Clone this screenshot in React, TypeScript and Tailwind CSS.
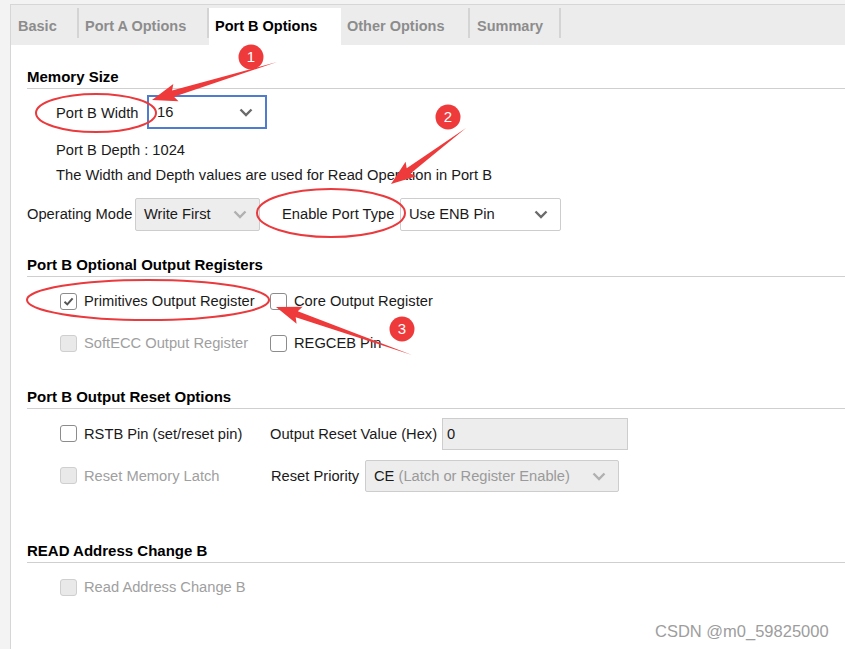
import React from "react";

function Chevron({ light }: { light?: boolean }) {
  return (
    <svg width="14" height="9" viewBox="0 0 14 9" className="shrink-0">
      <path d="M1.5 1.5 L7 7 L12.5 1.5" fill="none" stroke={light ? "#b0b0b0" : "#6b6b6b"} strokeWidth="2.4" />
    </svg>
  );
}

function Check({ checked, disabled }: { checked?: boolean; disabled?: boolean }) {
  return (
    <div
      className={
        "w-[17px] h-[17px] rounded-[3px] border shrink-0 flex items-center justify-center " +
        (disabled ? "bg-[#e9e9e9] border-[#cfcfcf]" : "bg-white border-[#8c8c8c]")
      }
    >
      {checked && (
        <svg width="13" height="13" viewBox="0 0 13 13">
          <path d="M2.5 6.8 L5.3 9.4 L10.6 3.4" fill="none" stroke="#555" strokeWidth="2" />
        </svg>
      )}
    </div>
  );
}

function Header({ title, mt }: { title: string; mt: string }) {
  return (
    <div className={"h-[22px] border-b border-[#cfcfcf] flex items-start " + mt}>
      <span className="font-bold text-[15px] leading-[20px] text-black">{title}</span>
    </div>
  );
}

function arrow(tx: number, ty: number, px: number, py: number) {
  const dx = px - tx, dy = py - ty;
  const L = Math.hypot(dx, dy);
  const ux = dx / L, uy = dy / L;
  const nx = -uy, ny = ux;
  const head = 22, hw = 9, sw = 3.2;
  const bx = px - ux * head, by = py - uy * head;
  const pts = [
    [tx, ty],
    [bx + nx * sw, by + ny * sw],
    [bx + nx * hw - ux * 3, by + ny * hw - uy * 3],
    [px, py],
    [bx - nx * hw - ux * 3, by - ny * hw - uy * 3],
    [bx - nx * sw, by - ny * sw],
  ];
  return pts.map((p) => p[0].toFixed(1) + "," + p[1].toFixed(1)).join(" ");
}

function Badge({ x, y, n }: { x: number; y: number; n: string }) {
  return (
    <g>
      <circle cx={x} cy={y} r="12.5" fill="#ee3a3a" />
      <text x={x} y={y + 5} textAnchor="middle" fill="#fff" fontSize="15" fontFamily="Liberation Sans, Arial, sans-serif">
        {n}
      </text>
    </g>
  );
}

function Sep() {
  return <div className="w-[2px] h-[30px] bg-[#d4d4d4] self-start mt-[3px] shrink-0" />;
}

export default function App() {
  return (
    <div className="relative w-[845px] h-[649px] overflow-hidden bg-[#f3f3f3] pl-[10px] pt-[4px] font-['Liberation_Sans',Arial,sans-serif] text-[14.7px] text-[#1a1a1a]">
      <div className="h-full border-l border-t border-[#d6d6d6] bg-white flex flex-col">
        {/* tab bar */}
        <div className="h-[40px] bg-[#ececec] flex items-end shrink-0">
          <div className="h-[37px] w-[66px] flex items-center pl-[7px]">
            <span className="font-bold text-[14.5px] text-[#8c8c8c]">Basic</span>
          </div>
          <Sep />
          <div className="h-[37px] w-[128px] flex items-center pl-[6px]">
            <span className="font-bold text-[14.5px] text-[#8c8c8c]">Port A Options</span>
          </div>
          <Sep />
          <div className="h-[37px] w-[132px] bg-white flex items-center pl-[6px]">
            <span className="font-bold text-[14.5px] text-black">Port B Options</span>
          </div>
          <div className="h-[37px] w-[127px] flex items-center pl-[6px]">
            <span className="font-bold text-[14.5px] text-[#8c8c8c]">Other Options</span>
          </div>
          <Sep />
          <div className="h-[37px] w-[89px] flex items-center pl-[7px]">
            <span className="font-bold text-[14.5px] text-[#8c8c8c]">Summary</span>
          </div>
          <Sep />
        </div>

        {/* content */}
        <div className="pl-[16px] flex flex-col">
          <Header title="Memory Size" mt="mt-[22px]" />

          <div className="mt-[6px] flex items-center h-[34px] pl-[29px]">
            <span className="w-[91px] pt-[3px]">Port B Width</span>
            <div className="w-[120px] h-[34px] border-2 border-[#4f7ccc] bg-white flex items-center justify-between pl-[8px] pr-[12px]">
              <span>16</span>
              <Chevron />
            </div>
          </div>

          <div className="mt-[11px] pl-[29px] leading-[20px]">Port B Depth : 1024</div>
          <div className="mt-[5px] pl-[29px] leading-[20px]">
            The Width and Depth values are used for Read Operation in Port B
          </div>

          <div className="mt-[13px] flex items-center h-[33px]">
            <span className="w-[108px]">Operating Mode</span>
            <div className="w-[125px] h-[33px] border border-[#cdcdcd] rounded-[2px] bg-[#ededed] flex items-center justify-between pl-[8px] pr-[12px]">
              <span>Write First</span>
              <Chevron light />
            </div>
            <span className="ml-[22px] w-[118px]">Enable Port Type</span>
            <div className="w-[161px] h-[33px] border border-[#cdcdcd] rounded-[2px] bg-white flex items-center justify-between pl-[8px] pr-[12px]">
              <span>Use ENB Pin</span>
              <Chevron />
            </div>
          </div>

          <Header title="Port B Optional Output Registers" mt="mt-[24px]" />

          <div className="mt-[14px] flex items-center h-[20px] pl-[33px]">
            <div className="w-[210px] flex items-center gap-[7px]">
              <Check checked />
              <span>Primitives Output Register</span>
            </div>
            <div className="flex items-center gap-[7px]">
              <Check />
              <span>Core Output Register</span>
            </div>
          </div>
          <div className="mt-[22px] flex items-center h-[20px] pl-[33px]">
            <div className="w-[210px] flex items-center gap-[7px]">
              <Check disabled />
              <span className="text-[#a0a0a0]">SoftECC Output Register</span>
            </div>
            <div className="flex items-center gap-[7px]">
              <Check />
              <span>REGCEB Pin</span>
            </div>
          </div>

          <Header title="Port B Output Reset Options" mt="mt-[34px]" />

          <div className="mt-[9px] flex items-center h-[32px] pl-[33px]">
            <div className="w-[210px] flex items-center gap-[7px]">
              <Check />
              <span>RSTB Pin (set/reset pin)</span>
            </div>
            <span className="w-[172px]">Output Reset Value (Hex)</span>
            <div className="w-[186px] h-[32px] border border-[#cdcdcd] bg-[#ededed] flex items-center pl-[4px]">
              <span>0</span>
            </div>
          </div>
          <div className="mt-[10px] flex items-center h-[32px] pl-[33px]">
            <div className="w-[211px] flex items-center gap-[7px]">
              <Check disabled />
              <span className="text-[#a0a0a0]">Reset Memory Latch</span>
            </div>
            <span className="w-[94px]">Reset Priority</span>
            <div className="w-[254px] h-[32px] border border-[#cdcdcd] rounded-[2px] bg-[#ededed] flex items-center justify-between pl-[8px] pr-[12px]">
              <span>
                CE <span className="text-[#9a9a9a]">(Latch or Register Enable)</span>
              </span>
              <Chevron light />
            </div>
          </div>

          <Header title="READ Address Change B" mt="mt-[49px]" />

          <div className="mt-[14px] flex items-center h-[20px] pl-[33px] gap-[7px]">
            <Check disabled />
            <span className="text-[#a0a0a0]">Read Address Change B</span>
          </div>
        </div>
      </div>

      {/* watermark */}
      <div className="absolute left-[655px] top-[621px] text-[16.5px] text-[#9d9d9d] leading-[20px]">CSDN @m0_59825000</div>

      {/* annotations */}
      <svg className="absolute left-0 top-0 pointer-events-none" width="845" height="649" viewBox="0 0 845 649">
        <ellipse cx="96" cy="113" rx="60" ry="19" fill="none" stroke="#ea3a3d" strokeWidth="2" />
        <ellipse cx="331" cy="213" rx="74" ry="24" fill="none" stroke="#ea3a3d" strokeWidth="2" />
        <ellipse cx="148" cy="300" rx="121" ry="20" fill="none" stroke="#ea3a3d" strokeWidth="2" />
        <polygon points={arrow(277, 62, 152, 100)} fill="#ee3a3a" />
        <polygon points={arrow(466, 128, 391, 184)} fill="#ee3a3a" />
        <polygon points={arrow(412, 355, 276, 307)} fill="#ee3a3a" />
        <Badge x={251} y={57} n="1" />
        <Badge x={448} y={117} n="2" />
        <Badge x={402} y={329} n="3" />
      </svg>
    </div>
  );
}
